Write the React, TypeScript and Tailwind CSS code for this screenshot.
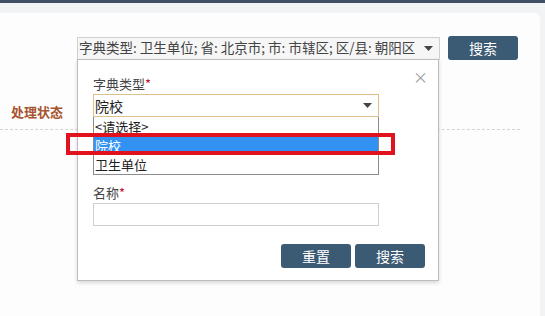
import React from 'react';

const font = { fontFamily: '"Noto Sans CJK SC", "Noto Sans", sans-serif' };

const Caret = () => (
  <svg width="9" height="5" viewBox="0 0 9 5" className="shrink-0">
    <path d="M0 0 L9 0 L4.5 5 Z" fill="#444" />
  </svg>
);

const App = () => {
  return (
    <div
      className="relative w-[545px] h-[316px] overflow-hidden bg-[#f1f3f4] text-[#333]"
      style={font}
    >
      <div className="h-[3px] bg-[#3e4f66]" />

      {/* card */}
      <div className="mt-[10px] mr-[5px] h-[303px] rounded-tr-md bg-[#fdfdfe]">
        <div className="flex items-center pt-[23px] pl-[77px]">
          <div className="flex h-[23px] w-[363px] items-center justify-between border border-[#cfcfcf] bg-[#f6f6f6] pl-[1px] pr-[6px] text-[13.5px] leading-none text-[#444]">
            <span className="whitespace-nowrap">字典类型: 卫生单位; 省: 北京市; 市: 市辖区; 区/县: 朝阳区</span>
            <Caret />
          </div>
          <button className="ml-[8px] h-[24px] w-[70px] rounded-[3px] bg-[#3b5a74] text-[14px] text-white">
            搜索
          </button>
        </div>

        <div className="mt-[43px] mr-[20px] flex h-[27px] items-start border-b border-dashed border-[#d4d4d4] pl-[11px]">
          <span className="text-[13px] font-semibold leading-[17px] text-[#a6532f]">处理状态</span>
        </div>
      </div>

      {/* popup panel */}
      <div className="absolute left-[77px] top-[59px] h-[222px] w-[362px] border border-[#bdbdbd] bg-white pl-[15px] pt-[16px] shadow-[0_2px_4px_rgba(0,0,0,0.15)]">
        <span className="absolute right-[10px] top-[9px] text-[15px] leading-none text-[#9a9a9a]">×</span>

        <div className="h-[18px] text-[13px] leading-[16px] text-[#444]">
          字典类型<span className="text-[#c8102e]">*</span>
        </div>
        <div className="flex h-[23px] w-[286px] items-center justify-between border border-[#dcc08a] pl-[1px] pr-[6px] text-[14px] leading-none text-[#222]">
          <span>院校</span>
          <Caret />
        </div>

        {/* options list overlay */}
        <div className="absolute left-[15px] top-[57px] z-10 w-[286px] border border-[#8c8c8c] border-t-0 bg-white text-[13px] leading-[19px] text-[#222]">
          <div className="h-[19px] overflow-hidden pl-[1px]">&lt;请选择&gt;</div>
          <div className="h-[19px] overflow-hidden bg-[#3292f3] pl-[1px] text-white">院校</div>
          <div className="h-[19px] overflow-hidden pl-[1px]">卫生单位</div>
        </div>

        <div className="mt-[68px] h-[18px] text-[13px] leading-[16px] text-[#444]">
          名称<span className="text-[#c8102e]">*</span>
        </div>
        <div className="h-[23px] w-[286px] border border-[#cfcfcf] bg-white" />

        <div className="mt-[18px] flex justify-end gap-[4px] pr-[13px]">
          <button className="h-[24px] w-[70px] rounded-[3px] bg-[#3b5a74] text-[14px] text-white">重置</button>
          <button className="h-[24px] w-[70px] rounded-[3px] bg-[#3b5a74] text-[14px] text-white">搜索</button>
        </div>
      </div>

      {/* red highlight */}
      <div className="absolute left-[66px] top-[133px] z-20 h-[22px] w-[329px] border-[4px] border-[#e0121d]" />
    </div>
  );
};

export default App;
